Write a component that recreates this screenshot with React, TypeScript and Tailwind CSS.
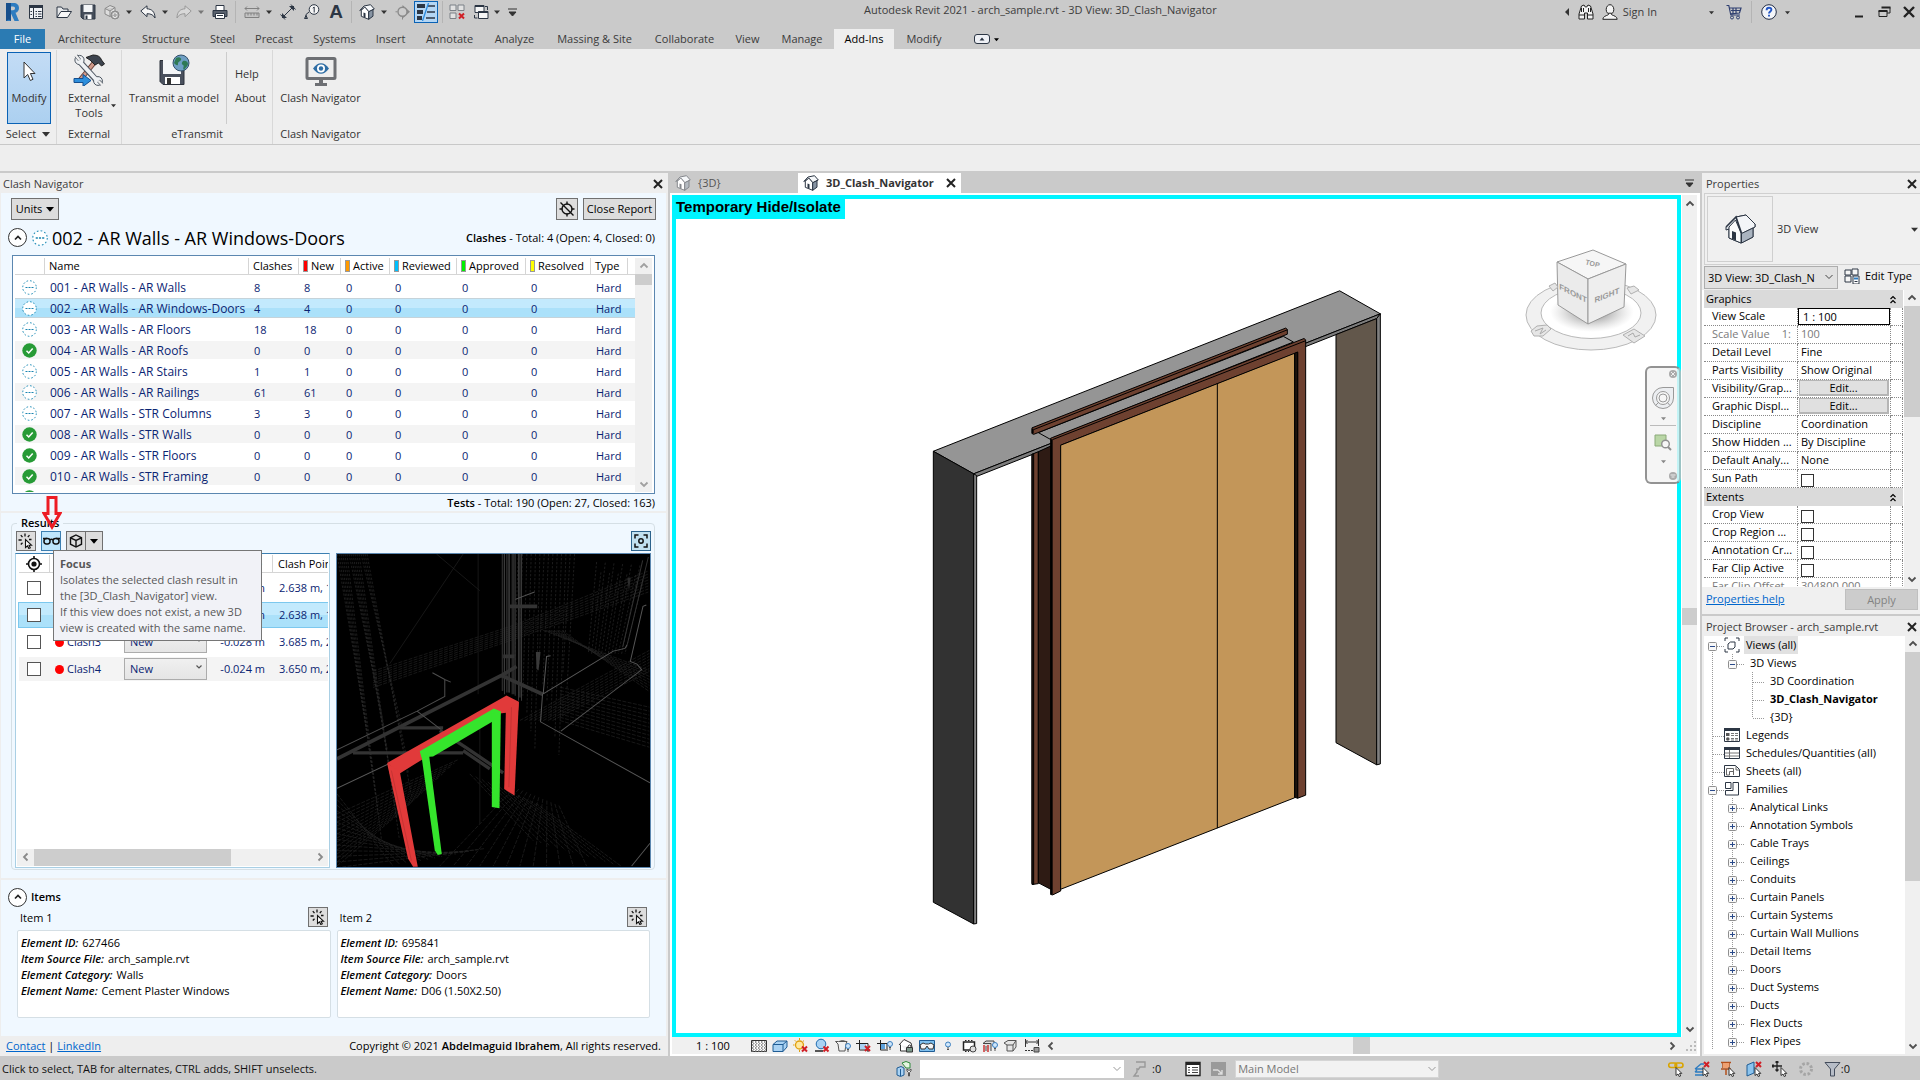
import React, { useState } from "react";

const INK = "#2c3644";

/* ---------- small shared pieces ---------- */

function Svg({ children, w = 16, h = 16, vb }: { children: React.ReactNode; w?: number; h?: number; vb?: string }) {
  return (
    <svg width={w} height={h} viewBox={vb ?? `0 0 ${w} ${h}`} fill="none" className="shrink-0" aria-hidden="true">
      {children}
    </svg>
  );
}

function Caret({ color = "#333", size = 6 }: { color?: string; size?: number }) {
  return (
    <Svg w={size} h={size} vb="0 0 6 6">
      <path d="M0 1.500h6L3 5z" fill={color} />
    </Svg>
  );
}

function Chevron({ dir, color = "#505050" }: { dir: "up" | "down" | "left" | "right"; color?: string }) {
  const d = {
    up: "M1.500 6.500 5 3l3.500 3.500",
    down: "M1.500 3.500 5 7l3.500-3.500",
    left: "M6.500 1.500 3 5l3.500 3.500",
    right: "M3.500 1.500 7 5 3.500 8.500",
  }[dir];
  return (
    <Svg w={10} h={10}>
      <path d={d} stroke={color} strokeWidth="1.800" />
    </Svg>
  );
}

function CloseX() {
  return (
    <button aria-label="Close" className="flex size-3 items-center justify-center">
      <Svg w={10} h={10}>
        <path d="M1 1l8 8M9 1 1 9" stroke="#222" strokeWidth="2" />
      </Svg>
    </button>
  );
}

function ClickIcon() {
  return (
    <Svg w={16} h={16}>
      <path
        d="M7 .5v3M2.800 2.200l1.700 2M11.500 2.200l-1.700 2M.5 7h3.200M13.500 6.500h-2.500M2.800 11.500l1.700-1.700"
        stroke="#111"
        strokeWidth="1.300"
      />
      <path d="M7.500 6.500v8l2-1.700 1.300 2.700 1.500-.7-1.300-2.600h2.500z" fill="#fff" stroke="#111" strokeWidth="1.100" />
    </Svg>
  );
}

function OpenStatus({ size = 15 }: { size?: number }) {
  return (
    <Svg w={size} h={size} vb="0 0 15 15">
      <circle cx="7.500" cy="7.500" r="6.800" fill="#fff" stroke="#1b8ab5" strokeWidth="1" strokeDasharray="1.600 2" />
      <path d="M3.500 7.500h2M6.500 7.500h2M9.500 7.500h2" stroke="#1a84b0" strokeWidth="1.200" />
    </Svg>
  );
}

function DoneStatus() {
  return (
    <Svg w={15} h={15}>
      <circle cx="7.500" cy="7.500" r="7.200" fill="#279b36" />
      <path d="M4.500 7.800 6.700 10l4-4.600" stroke="#fff" strokeWidth="1.500" />
    </Svg>
  );
}

function HouseIcon({ size = 16, faded = false }: { size?: number; faded?: boolean }) {
  const c = faded ? "#85888d" : INK;
  return (
    <Svg w={size} h={size} vb="0 0 16 16">
      <path d="M.8 6.500 5 2l6.500-1.300L15.300 5l-5.500 2.800L6 3.500z" fill="#f6f8fa" stroke={c} strokeWidth="1" strokeLinejoin="round" />
      <path d="M2.300 6.200 5.800 3l3.900 4.500v7.800l-7.400-3z" fill="#fff" stroke={c} strokeWidth="1" strokeLinejoin="round" />
      <path d="M9.700 7.700 14 5.600v6.600l-4.300 3.100z" fill={faded ? "#b5bbc2" : "#8794a3"} stroke={c} strokeWidth="1" strokeLinejoin="round" />
      <path d="M4.500 12.800V8.500l2 .8v4.400" fill={c} />
    </Svg>
  );
}

/* ---------- title bar ---------- */

const RedX = ({ x, y }: { x: number; y: number }) => (
  <path d={`M${x} ${y}l5 5m0-5-5 5`} stroke="#d01f26" strokeWidth="2" />
);

const quick = {
  logo: (
    <Svg w={16} h={20}>
      <path d="M2 1h7.500C13 1 15 3 15 6c0 2.500-1.300 4.200-3.500 4.800L15 19h-4.500L7 11.500V19H2z" fill="#2e7cc0" />
      <path d="M2 1h5v18l-2-1.500L2 19z" fill="#174f8c" />
      <path d="M7 4.500h2c1.300 0 2 .7 2 1.800 0 1.200-.8 1.900-2 1.900H7z" fill="#cacaca" />
    </Svg>
  ),
  props: (
    <Svg>
      <path d="M1.500 1.500h13v13h-13z" fill="#f0f2f5" stroke={INK} />
      <path d="M1 1h14v3H1zM5 4h1v11H5z" fill={INK} />
      <path d="M2.500 7.500H4M2.500 10.500H4M7.500 7.500h1.500m1 0h3.500M7.500 10h1.500m1 0h3.500M7.500 12.500h1.500m1 0h3.500" stroke={INK} />
    </Svg>
  ),
  open: (
    <Svg>
      <path d="M1 13.500V3h4.500l1.500 2h5v2.500" fill="#e6e8ea" stroke={INK} />
      <path d="M1 13.500 5 7.500h10.500l-4 6z" fill="#f7f7f7" stroke={INK} />
    </Svg>
  ),
  save: (
    <Svg>
      <path d="M1 1h14v14H3l-2-2z" fill="#454d5a" stroke={INK} />
      <path d="M3.500 1h9v7h-9z" fill="#f3f5f7" />
      <path d="M4.500 10.500h7V15h-7z" fill="#fff" />
      <path d="M5.500 11.500h2V15h-2z" fill={INK} />
    </Svg>
  ),
  sync: (
    <Svg>
      <path d="M1 4.500 6 1.500l5 2v6L6 12.500 1 10zM1 4.500l5 2.500 5-3.500M6 7v5.500" fill="#ddd" stroke="#8a8a8a" />
      <circle cx="11" cy="11" r="4" fill="#a9a9a9" stroke="#888" />
      <path d="M9 11a2 2 0 0 1 4-.5M13 11.500a2 2 0 0 1-4 .3" stroke="#eee" />
    </Svg>
  ),
  undo: (
    <Svg>
      <path d="M.8 7 7 1.800v3C11.500 5 15 7.500 15 14c-1.500-3-4-4.300-8-4.300v3z" fill="#f6f6f6" stroke={INK} strokeLinejoin="round" />
    </Svg>
  ),
  redo: (
    <Svg>
      <path d="M15.200 7 9 1.800v3C4.500 5 1 7.500 1 14c1.500-3 4-4.300 8-4.300v3z" fill="#d8d8d8" stroke="#999" strokeLinejoin="round" />
    </Svg>
  ),
  print: (
    <Svg>
      <path d="M4 1.500h8V7H4z" fill="#fff" stroke={INK} />
      <path d="M1 6.500h14v6H1z" fill="#5a626e" stroke={INK} />
      <path d="M3.500 9.500h9v5h-9z" fill="#fff" stroke={INK} />
      <path d="M5 11.500h6" stroke={INK} />
    </Svg>
  ),
  measure: (
    <Svg>
      <path d="M1 4.500h14M3 2.500l-2 2 2 2M13 2.500l2 2-2 2" stroke="#808080" />
      <path d="M1 9h14v4.500H1zM4 9v2.500M7 9v2.500M10 9v2.500M13 9v2.500" fill="#c4c4c4" stroke="#808080" />
    </Svg>
  ),
  dim: (
    <Svg>
      <path d="M3.500 12.500 12.500 3.500" stroke={INK} />
      <path d="M2 9v5h5zM9 2h5v5z" fill={INK} />
      <path d="M.5 10.500 5 15.500M11 .5l4.500 5" stroke={INK} />
    </Svg>
  ),
  tag: (
    <Svg>
      <circle cx="10" cy="5.500" r="4.800" fill="#f5f5f5" stroke={INK} />
      <path d="M8.800 4.200 10.200 3v5.500M5 8 2 10.500V15M.5 14.500l1.500-3 1.500 3z" stroke={INK} />
    </Svg>
  ),
  section: (
    <Svg>
      <path d="M7.500 1 15 7.800 7.500 14.500z" fill="#8a8a8a" />
      <circle cx="7.500" cy="7.800" r="4.500" fill="#ccc" stroke="#8a8a8a" strokeWidth="1.400" />
      <path d="M.5 7.800h2M7.500 12.500V15.500" stroke="#8a8a8a" />
    </Svg>
  ),
  thin: (
    <Svg w={20} h={18}>
      <path d="M1 3h8M1 9h6M1 15h5" stroke={INK} strokeWidth="4" />
      <path d="M12 3h7M11 9h8M10 15h9" stroke={INK} strokeWidth="1.300" />
      <path d="M12.500 0 6.500 18" stroke="#2a8be0" strokeWidth="1.300" />
    </Svg>
  ),
  closeHidden: (
    <Svg>
      <path d="M1 1h6v5.500H1zM9 1h6v5.500H9zM1 9h6v5.500H1z" fill="#e2e2e2" stroke="#7b8087" />
      <RedX x={10} y={9.5} />
    </Svg>
  ),
  switchWin: (
    <Svg>
      <path d="M2 1.500h9v7H2zM5.500 7.500h9.500v7H5.500z" fill="#f6f6f6" stroke={INK} />
      <path d="M2 2h9M5.500 8h9.500" stroke={INK} strokeWidth="2" />
      <path d="M1.500 11v3h3M12 2.500h2.500V6" stroke={INK} />
    </Svg>
  ),
  binoculars: (
    <Svg>
      <path d="M3.500 2 6 1l1.300 2h1.400L10 1l2.500 1L15 10v5H9.500V9h-3v6H1v-5z" fill="#f4f4f4" stroke="#222" strokeLinejoin="round" />
      <path d="M3.500 4v4m2-4v4m5-4v4m2-4v4M1 11h5.500m3 0H15" stroke="#222" />
    </Svg>
  ),
  user: (
    <Svg>
      <ellipse cx="8" cy="5.500" rx="3.800" ry="4.800" fill="#f4f4f4" stroke="#222" />
      <path d="M.8 15.300C1 12.500 4 11.800 5.800 11c1.500-.6.500-1.800.5-1.800h3.400s-1 1.200.5 1.800c1.800.8 4.800 1.500 5 4.300z" fill="#f4f4f4" stroke="#222" />
    </Svg>
  ),
  cart: (
    <Svg>
      <path d="M.5 1.500h2.300l2 9.500H14M3.500 4h11.500l-1.500 5-9 .8M7 4v5m3-5v5m-5-2.500h9" stroke="#2f3f70" strokeWidth="1.200" />
      <circle cx="6" cy="13.500" r="1.500" stroke="#2f3f70" />
      <circle cx="12" cy="13.500" r="1.500" stroke="#2f3f70" />
    </Svg>
  ),
  help: (
    <Svg>
      <circle cx="8" cy="8" r="7.300" fill="#f4f6fa" stroke="#222c44" />
      <path d="M5.600 6.200C5.600 4.500 6.600 3.700 8 3.700s2.400.8 2.400 2.100C10.400 7.500 8 7.600 8 9.600M8 10.800v1.800" stroke="#2457c5" strokeWidth="1.900" />
    </Svg>
  ),
};

function Tool({ label, children, className = "" }: { label: string; children: React.ReactNode; className?: string }) {
  return (
    <button title={label} aria-label={label} className={`flex h-[22px] shrink-0 items-center justify-center ${className}`}>
      {children}
    </button>
  );
}

const Rule = ({ className = "" }: { className?: string }) => <span className={`h-[22px] w-px bg-[#b4b4b4] ${className}`} />;

function TitleBar() {
  return (
    <header className="flex h-[29px] items-start bg-[#cacaca] pt-px text-[#3c3c3c]">
      <div className="flex items-center pl-1">
        <Tool label="Revit">{quick.logo}</Tool>
        <Tool label="Home" className="ml-2">{quick.props}</Tool>
        <Tool label="Open" className="ml-3">{quick.open}</Tool>
        <Tool label="Save" className="ml-2">{quick.save}</Tool>
        <Tool label="Synchronize" className="ml-2">{quick.sync}</Tool>
        <Tool label="Synchronize options" className="ml-1.5"><Caret /></Tool>
        <Tool label="Undo" className="ml-2">{quick.undo}</Tool>
        <Tool label="Undo list" className="ml-1.5"><Caret /></Tool>
        <Tool label="Redo" className="ml-2">{quick.redo}</Tool>
        <Tool label="Redo list" className="ml-1.5"><Caret color="#777" /></Tool>
        <Tool label="Print" className="ml-2">{quick.print}</Tool>
        <Rule className="ml-[7px]" />
        <Tool label="Measure" className="ml-2">{quick.measure}</Tool>
        <Tool label="Measure options" className="ml-1.5"><Caret /></Tool>
        <Tool label="Aligned dimension" className="ml-2">{quick.dim}</Tool>
        <Tool label="Tag by category" className="ml-2">{quick.tag}</Tool>
        <Tool label="Text" className="ml-2 w-4 font-['Liberation_Sans'] text-[19px] font-bold text-[#2c3644]">A</Tool>
        <Rule className="ml-[7px]" />
        <Tool label="Default 3D view" className="ml-[7px]"><HouseIcon /></Tool>
        <Tool label="3D view options" className="ml-1.5"><Caret /></Tool>
        <Tool label="Section" className="ml-2">{quick.section}</Tool>
        <Tool label="Thin lines" className="ml-[3px] w-6 border border-[#0a62b5] bg-[#b4d6f4]">{quick.thin}</Tool>
        <Rule className="ml-1" />
        <Tool label="Close inactive views" className="ml-1.5">{quick.closeHidden}</Tool>
        <Tool label="Switch windows" className="ml-2">{quick.switchWin}</Tool>
        <Tool label="Window list" className="ml-[5px]"><Caret /></Tool>
        <Tool label="Customize toolbar" className="ml-2">
          <Svg w={9} h={9}>
            <path d="M0 1h9M1 4h7L4.500 8z" stroke="#333" fill="#333" />
          </Svg>
        </Tool>
      </div>
      <h1 className="min-w-0 flex-1 truncate text-center leading-[18px]">
        Autodesk Revit 2021 - arch_sample.rvt - 3D View: 3D_Clash_Navigator
      </h1>
      <div className="flex items-center pr-[5px]">
        <Tool label="Collapse search">
          <Svg w={6} h={8}><path d="M5 0v8L1 4z" fill="#333" /></Svg>
        </Tool>
        <Tool label="Search" className="ml-2">{quick.binoculars}</Tool>
        <button className="ml-2 flex items-center gap-[5px]">{quick.user}Sign In</button>
        <Tool label="Account" className="ml-[52px]"><Caret size={5} /></Tool>
        <Tool label="App store" className="ml-3">{quick.cart}</Tool>
        <Rule className="ml-[9px]" />
        <Tool label="Help" className="ml-[9px]">{quick.help}</Tool>
        <Tool label="Help menu" className="ml-2"><Caret size={5} /></Tool>
        <Tool label="Minimize" className="ml-16">
          <Svg w={10} h={12}><path d="M1 10.500h8" stroke="#222" strokeWidth="2" /></Svg>
        </Tool>
        <Tool label="Restore" className="ml-3.5">
          <Svg w={13} h={12}>
            <path d="M4 1.500h8v5.500H9M1 5h8v5.500H1z" stroke="#222" />
            <path d="M3.500 1.500h9M.5 5h9" stroke="#222" strokeWidth="2" />
          </Svg>
        </Tool>
        <Tool label="Close" className="ml-3">
          <Svg w={12} h={12}><path d="M1 1l10 10M11 1 1 11" stroke="#222" strokeWidth="2.400" /></Svg>
        </Tool>
      </div>
    </header>
  );
}

/* ---------- ribbon ---------- */

const tabs: [string, string][] = [
  ["Architecture", "w-[85px]"],
  ["Structure", "w-[68px]"],
  ["Steel", "w-[45px]"],
  ["Precast", "w-[58px]"],
  ["Systems", "w-[63px]"],
  ["Insert", "w-[49px]"],
  ["Annotate", "w-[69px]"],
  ["Analyze", "w-[61px]"],
  ["Massing & Site", "w-[99px]"],
  ["Collaborate", "w-[81px]"],
  ["View", "w-[45px]"],
  ["Manage", "w-[64px]"],
  ["Add-Ins", "w-[60px]"],
  ["Modify", "w-[60px]"],
];

function RibbonTabs() {
  return (
    <nav className="flex h-5 bg-[#cacaca] text-[#3a3a3a]">
      <button className="w-[45px] bg-[#2b7bb3] text-white">File</button>
      <span className="w-0.5" />
      {tabs.map(([t, w]) => (
        <button key={t} className={`${w} text-center whitespace-nowrap ${t === "Add-Ins" ? "bg-[#eee] text-black" : ""}`}>
          {t}
        </button>
      ))}
      <button aria-label="Ribbon display" className="ml-5 flex items-center gap-1">
        <Svg w={16} h={10}>
          <rect x=".5" y=".5" width="15" height="9" rx="2.500" fill="#eef0f5" stroke={INK} />
          <path d="M5.500 6.500h5L8 3.500z" fill={INK} />
        </Svg>
        <Caret size={5} color="#000" />
      </button>
    </nav>
  );
}

const RibbonLabel = ({ children }: { children: React.ReactNode }) => (
  <div className="flex h-5 items-center justify-center gap-1.5">{children}</div>
);

function Ribbon() {
  return (
    <section className="flex h-[96px] border-b border-[#c8c8c8] bg-[#eee] pt-px text-[#333]">
      <div className="w-[57px] border-r border-[#d8d8d8] pt-0.5">
        <button className="mx-[7px] flex h-[72px] w-11 flex-col items-center border border-[#0a62b5] bg-linear-to-b from-[#c3dcf5] to-[#acd0f0]">
          <span className="flex h-[37px] items-center">
            <Svg w={14} h={22}>
              <path d="M2 1v16l3.700-3.500 2.600 6 2.700-1.200-2.600-5.800H13z" fill="#fff" stroke="#333" />
            </Svg>
          </span>
          <span className="leading-4">Modify</span>
        </button>
        <RibbonLabel>Select <Caret size={8} /></RibbonLabel>
      </div>
      <div className="w-[65px] border-r border-[#d8d8d8] pt-0.5">
        <button className="flex h-[72px] w-full flex-col items-center">
          <Svg w={32} h={34}>
            <path d="M21 11 7 28" stroke="#6b3f35" strokeWidth="5" />
            <path d="M21 11 7 28" stroke="#cf9a8a" strokeWidth="3" />
            <path d="M13 5.500 20 3q7 0 8.500 5l3 4-3 2-3-3-3.500 2-5-5z" fill="#3d444f" stroke="#222" strokeLinejoin="round" />
            <path d="M8 11 25 30" stroke="#4c5560" strokeWidth="6" />
            <circle cx="6.500" cy="8" r="4.600" fill="#eef1f4" stroke="#4c5560" />
            <circle cx="25" cy="29" r="4.400" fill="#eef1f4" stroke="#4c5560" />
            <path d="M7 10 24.500 29" stroke="#eef1f4" strokeWidth="4" />
            <path d="M3 3.500 6.500 8M29 32.500 25.500 29" stroke="#4c5560" strokeWidth="3.600" />
            <path d="M2 2.500 6.500 8M30 33.500 25.500 29" stroke="#eee" strokeWidth="2.400" />
            <path d="M1 26.500h9v-4l8 6-8 6v-4H1z" fill="#2e8fdc" stroke="#144f8f" />
          </Svg>
          <span className="relative pt-1 leading-[15px]">
            External<br />Tools
            <span className="absolute top-[17px] -right-1.5"><Caret size={5} /></span>
          </span>
        </button>
        <RibbonLabel>External</RibbonLabel>
      </div>
      <div className="w-[151px] border-r border-[#d8d8d8] pt-0.5">
        <div className="flex h-[72px]">
          <button className="flex w-[105px] flex-col items-center border-r border-[#ccc]">
            <Svg w={32} h={38}>
              <path d="M2 8.500h24v24H5l-3-3z" fill="#4a515e" stroke="#2b313b" />
              <path d="M5 8h18v14H5z" fill="#f4f6f8" />
              <path d="M7 25h15v7H7z" fill="#fff" />
              <path d="M9 26h4v6H9z" fill="#333" />
              <circle cx="23" cy="11" r="8" fill="#6e9fc4" stroke="#33506b" />
              <path d="M18 6c3-2 6 0 5 2s-3 1-3 4-3 0-4-1M25 9c3-1 5 1 5 3s-3 4-4 6c-2-2 1-4-1-5s-1-3 0-4z" fill="#2f7a55" />
            </Svg>
            <span className="leading-4 whitespace-nowrap">Transmit a model</span>
          </button>
          <div className="flex flex-col gap-2 pt-[14px] pl-2 leading-4">
            <button className="text-left">Help</button>
            <button className="text-left">About</button>
          </div>
        </div>
        <RibbonLabel>eTransmit</RibbonLabel>
      </div>
      <div className="w-[95px] pt-0.5">
        <button className="flex h-[72px] w-full flex-col items-center">
          <Svg w={32} h={38}>
            <rect x="2" y="6.500" width="28" height="20" rx="1" fill="#eee" stroke="#6d6f73" strokeWidth="3" />
            <path d="M14 28h4v3h4v3H10v-3h4z" fill="#6d6f73" />
            <path d="M8 16.500c5-7 11-7 16 0-5 7-11 7-16 0z" fill="#2e6da4" />
            <circle cx="16" cy="16.500" r="4" fill="#fff" />
            <circle cx="16" cy="16.500" r="2.200" fill="#2e6da4" />
          </Svg>
          <span className="leading-4 whitespace-nowrap">Clash Navigator</span>
        </button>
        <RibbonLabel>Clash Navigator</RibbonLabel>
      </div>
    </section>
  );
}

/* ---------- clash navigator panel ---------- */

const tests: [string, number, boolean][] = [
  ["001 - AR Walls - AR Walls", 8, false],
  ["002 - AR Walls - AR Windows-Doors", 4, false],
  ["003 - AR Walls - AR Floors", 18, false],
  ["004 - AR Walls - AR Roofs", 0, true],
  ["005 - AR Walls - AR Stairs", 1, false],
  ["006 - AR Walls - AR Railings", 61, false],
  ["007 - AR Walls - STR Columns", 3, false],
  ["008 - AR Walls - STR Walls", 0, true],
  ["009 - AR Walls - STR Floors", 0, true],
  ["010 - AR Walls - STR Framing", 0, true],
  ["", 0, true],
];

const testCols: [string, string, string][] = [
  ["Name", "w-[204px]", ""],
  ["Clashes", "w-[50px]", ""],
  ["New", "w-[42px]", "bg-[#f00]"],
  ["Active", "w-[49px]", "bg-[#ff9a00]"],
  ["Reviewed", "w-[67px]", "bg-[#00c0ff]"],
  ["Approved", "w-[69px]", "bg-[#00f000]"],
  ["Resolved", "w-[65px]", "bg-[#ff0]"],
  ["Type", "w-[37px]", ""],
];

const selectedFill = "bg-linear-to-b from-[#c3eafd] from-50% to-[#abe1fa] to-50%";

function VScroll({ thumb, className = "", color }: { thumb: string; className?: string; color?: string }) {
  return (
    <div className={`flex shrink-0 flex-col items-center bg-[#f0f0f0] ${className}`}>
      <button aria-label="Scroll up" className="flex h-4 items-center"><Chevron dir="up" color={color} /></button>
      <div className="min-h-0 w-full flex-1"><div className={`w-full bg-[#cdcdcd] ${thumb}`} /></div>
      <button aria-label="Scroll down" className="flex h-4 items-center"><Chevron dir="down" color={color} /></button>
    </div>
  );
}

function TestsTable() {
  const [selected, setSelected] = useState(1);
  return (
    <div className="mr-[11px] ml-[11px] flex h-[239px] shrink-0 overflow-hidden border border-[#5b87b0] bg-white px-0.5 pt-0.5 pb-px">
      <div className="min-w-0 flex-1 overflow-hidden">
        <table className="-mt-[3px] w-full table-fixed border-separate border-spacing-x-0 border-spacing-y-[3px]">
          <thead>
            <tr className="h-[17px] text-left leading-4">
              <th aria-label="Status" className="w-[30px] border-r border-b border-[#d5d5d5] p-0" />
              {testCols.map(([name, w, swatch]) => (
                <th key={name} className={`${w} border-r border-b border-[#d5d5d5] p-0 pl-1 font-normal whitespace-nowrap`}>
                  <span className="flex items-center gap-[3px]">
                    {swatch && <span className={`h-3 w-[5px] shrink-0 border border-[#999] ${swatch}`} />}
                    {name}
                  </span>
                </th>
              ))}
              <th aria-hidden="true" className="border-b border-[#d5d5d5] p-0" />
            </tr>
          </thead>
          <tbody className="text-[#0a2472]">
            {tests.map(([name, n, done], i) => (
              <tr
                key={i}
                onClick={() => setSelected(i)}
                className={`h-[18px] leading-[17px] ${
                  i === selected ? `${selectedFill} outline outline-[#c5d3da]` : i % 2 ? "bg-[#f4f4f4]" : ""
                }`}
              >
                <td className="p-0 pl-[7px]">{done ? <DoneStatus /> : <OpenStatus />}</td>
                <td className="p-0 pl-[5px] text-[12px] whitespace-nowrap">{name}</td>
                <td className="p-0 pl-[5px]">{name && n}</td>
                <td className="p-0 pl-[5px]">{name && n}</td>
                <td className="p-0 pl-[5px]">{name && 0}</td>
                <td className="p-0 pl-[5px]">{name && 0}</td>
                <td className="p-0 pl-[5px]">{name && 0}</td>
                <td className="p-0 pl-[5px]">{name && 0}</td>
                <td className="p-0 pl-[5px]">{name && "Hard"}</td>
                <td className="p-0" />
              </tr>
            ))}
          </tbody>
        </table>
      </div>
      <VScroll thumb="h-[11px]" className="w-[17px]" color="#a0a0a0" />
    </div>
  );
}

const IconButton = ({ label, children, className = "size-5 border-[#707070] bg-[#ddd]" }: { label: string; children: React.ReactNode; className?: string }) => (
  <button aria-label={label} title={label} className={`flex shrink-0 items-center justify-center border ${className}`}>
    {children}
  </button>
);

function CollapseButton({ label }: { label: string }) {
  return (
    <button aria-label={label} className="flex size-[19px] shrink-0 items-center justify-center rounded-full border border-[#333] bg-white">
      <Svg w={8} h={8}><path d="M1 5.500 4 2.500l3 3" stroke="#222" strokeWidth="1.700" /></Svg>
    </button>
  );
}

const clashes: [string, string, string][] = [
  ["Clash1", "-0.150 m", "2.638 m, 14"],
  ["Clash2", "-0.150 m", "2.638 m, 14"],
  ["Clash3", "-0.028 m", "3.685 m, 2"],
  ["Clash4", "-0.024 m", "3.650 m, 2"],
];

function ResultsTable() {
  return (
    <div className="flex min-h-0 w-[315px] shrink-0 flex-col border border-[#a9cfe4] border-t-[#3c7fb1] bg-white p-px">
      <div className="min-h-0 flex-1 overflow-hidden pl-0.5">
        <table className="-mt-[3px] w-full table-fixed border-separate border-spacing-x-0 border-spacing-y-[3px]">
          <thead>
            <tr className="h-[18px] text-left">
              <th className="w-[31px] border-r border-b border-[#d5d5d5] p-0">
                <span className="flex justify-center">
                  <Svg w={16} h={16}>
                    <circle cx="8" cy="8" r="5.500" stroke="#111" strokeWidth="1.600" />
                    <circle cx="8" cy="8" r="2.600" fill="#111" />
                    <path d="M8 0v3M8 13v3M0 8h3M13 8h3" stroke="#111" strokeWidth="1.600" />
                  </Svg>
                </span>
              </th>
              <th className="w-[72px] border-r border-b border-[#d5d5d5] p-0 pl-1 font-normal">Name</th>
              <th className="w-[92px] border-r border-b border-[#d5d5d5] p-0 pl-1 font-normal">Status</th>
              <th className="w-[59px] border-r border-b border-[#d5d5d5] p-0 pl-1 font-normal">Distance</th>
              <th className="overflow-hidden border-b border-[#d5d5d5] p-0 pl-[5px] font-normal whitespace-nowrap">Clash Point</th>
            </tr>
          </thead>
          <tbody className="text-[#0a2472]">
            {clashes.map(([name, dist, point], i) => (
              <tr key={name} className={`h-6 ${i === 1 ? `${selectedFill} outline outline-[#7cc8ee]` : i % 2 ? "bg-[#f4f4f4]" : ""}`}>
                <td className="p-0 pl-2">
                  <input type="checkbox" aria-label={`Mark ${name}`} className="block size-3.5 appearance-none border border-[#555] bg-white" />
                </td>
                <td className="p-0 pl-[5px]">
                  <span className="flex items-center gap-[3px]"><span className="size-[9px] rounded-full bg-[#f00]" />{name}</span>
                </td>
                <td className="p-0 pl-0.5">
                  <span className="relative block h-[22px] w-[83px]">
                    <select aria-label={`Status of ${name}`} className="block h-full w-full appearance-none border border-[#acacac] bg-linear-to-b from-[#f0f0f0] to-[#e5e5e5] pl-[5px]">
                      <option>New</option>
                      <option>Active</option>
                    </select>
                    <span className="pointer-events-none absolute top-[5px] right-1"><Svg w={8} h={8}><path d="M1.500 2.500 4 5l2.500-2.500" stroke="#555" strokeWidth="1.200" /></Svg></span>
                  </span>
                </td>
                <td className="p-0 pr-2 text-right whitespace-nowrap">{dist}</td>
                <td className="overflow-hidden p-0 pl-[6px] whitespace-nowrap">{point}</td>
              </tr>
            ))}
          </tbody>
        </table>
      </div>
      <div className="flex h-[17px] shrink-0 items-center bg-[#f0f0f0]">
        <button aria-label="Scroll left" className="flex w-[17px] justify-center"><Chevron dir="left" color="#8a8a8a" /></button>
        <div className="h-full flex-1"><div className="h-full w-[71%] bg-[#cdcdcd]" /></div>
        <button aria-label="Scroll right" className="flex w-[17px] justify-center"><Chevron dir="right" color="#8a8a8a" /></button>
      </div>
    </div>
  );
}

const range = (n: number) => Array.from({ length: n }, (_, i) => i);

function ClashPreview() {
  return (
    <div className="min-w-0 flex-1 border border-[#5b87b0] bg-black">
      <svg viewBox="22 101 938 937" preserveAspectRatio="xMidYMid slice" className="block size-full" role="img" aria-label="Clash preview">
        <rect x="22" y="101" width="938" height="937" fill="#000" />
        <g stroke="#2b2b2b" strokeWidth="2" strokeDasharray="7 5">
          {range(16).map((i) => <path key={i} d={`M${22 + i * 6} 101 L${110 + i * 9} ${620 + ((i * 67) % 400)}`} />)}
          {range(14).map((i) => <path key={i} d={`M${565 + i * 13} 101 L${555 + i * 12} ${420 + ((i * 53) % 300)}`} />)}
          {range(12).map((i) => <path key={i} d={`M${800 + i * 13} ${125 + ((i * 31) % 60)} L${775 + i * 10} 400`} />)}
        </g>
        <g stroke="#242424" strokeWidth="2" strokeDasharray="12 4" fill="none">
          {range(8).map((i) => <path key={i} d={`M130 ${452 + i * 7} L560 ${312 + i * 6} L955 ${152 + i * 9}`} />)}
          {range(14).map((i) => <path key={i} d={`M22 ${820 + i * 17} L${190 + i * 21} ${1036 - i * 4}`} />)}
          {range(14).map((i) => <path key={i} d={`M22 ${1036 - i * 12} L${230 + i * 12} ${860 - i * 11}`} />)}
          {range(12).map((i) => <path key={i} d={`M${555 + i * 12} ${800 + i * 5} L${330 + i * 40} 1036`} />)}
          {range(12).map((i) => <path key={i} d={`M${420 + i * 18} ${760 + i * 8} L${610 + i * 24} ${960 + i * 7}`} />)}
          {range(11).map((i) => <path key={i} d={`M690 ${500 + i * 10} L958 ${560 + i * 12}`} />)}
          {range(8).map((i) => <path key={i} d={`M${640 + i * 8} 330 L958 ${450 + i * 9}`} />)}
          {range(8).map((i) => <path key={i} d={`M${570 + i * 14} 600 L958 ${390 + i * 9}`} />)}
        </g>
        <path d="M400 101 180 430M320 101l130 110M445 101v420M450 600v310" stroke="#222" strokeWidth="2" />
        <g stroke="#3a3a3a" strokeWidth="3">
          <path d="M518 101v410M524 101v420M531 101v415M539 101v415M547 101v420M556 101v425M566 101v440M575 101v440" />
          <path d="M518 101v410M536 101v415M552 101v420M570 101v430" stroke="#2a2a2a" strokeWidth="5" />
        </g>
        <g stroke="#333" strokeWidth="11" fill="none">
          <path d="M22 715 515 465 560 438M515 465l125 57" />
          <path d="M70 697h330M210 622h130M330 630l80 52 110 75M400 690l80 55" strokeWidth="10" />
          <path d="M540 258h82M520 408h34" />
        </g>
        <path d="M618 395h14l-6 55-6-4z" fill="#3a3a3a" />
        <path d="M892 172h10l-5 40z" fill="#2c2c2c" />
        <g stroke="#5a5a5a" strokeWidth="3" fill="none">
          <path d="M22 688 262 572 345 528V477l18 8M308 457l37 20M262 572l70 54" stroke="#4e4e4e" />
          <path d="M22 803 240 700M640 520 850 392 885 384 892 372M640 520l10-112 12-2" />
          <path d="M638 520l-6 84L960 787M693 632l242-184-14-17-20-8 38-165 10-4M905 1036l55-68M556 237l58-22" stroke="#555" />
          <path d="M892 372 955 110M878 380 938 120" stroke="#333" />
        </g>
        <g fill="#e13a3a">
          <path d="M172 727 530 525l37 19-2 25-36 8-20 2L285 712l-75 47z" />
          <path d="M172 727 210 752l54 286h-14l-15-24z" />
          <path d="M528 572l39-28-13 281-31-20z" />
        </g>
        <g fill="#35e52c">
          <path d="M270 692 492 564l20 8-2 18-200 118-35 2z" />
          <path d="M275 705h23l38 295-12 3-9-14z" />
          <path d="M486 580l27-8-4 291-23-4z" />
        </g>
        <path d="M185 750l60 270M545 560l-8 240" stroke="#b83030" strokeWidth="2" />
      </svg>
    </div>
  );
}

const items = [
  { title: "Item 1", rows: [["Element ID:", "627466"], ["Item Source File:", "arch_sample.rvt"], ["Element Category:", "Walls"], ["Element Name:", "Cement Plaster Windows"]] },
  { title: "Item 2", rows: [["Element ID:", "695841"], ["Item Source File:", "arch_sample.rvt"], ["Element Category:", "Doors"], ["Element Name:", "D06 (1.50X2.50)"]] },
];

function ClashPanel() {
  return (
    <aside className="flex w-[670px] shrink-0 flex-col border-r-2 border-[#cacaca] bg-[#eee] text-black">
      <div className="flex h-5 shrink-0 items-center justify-between pt-px pr-1 pl-[3px] text-[#3c3c3c]">
        Clash Navigator <CloseX />
      </div>
      <div className="mr-0.5 ml-px flex min-h-0 flex-1 flex-col bg-[#f0f8ff] pt-[5px]">
        <div className="flex h-[22px] items-stretch gap-[5px] pr-2.5 pl-2.5">
          <button className="flex w-12 items-center justify-center gap-1 border border-[#707070] bg-[#ddd]">
            Units
            <Caret size={8} color="#000" />
          </button>
          <span className="flex-1" />
          <IconButton label="Toggle focus" className="w-[22px] border-[#707070] bg-[#ddd]">
            <Svg>
              <circle cx="8" cy="8" r="5" stroke="#111" strokeWidth="1.400" />
              <path d="M8 .5v3M8 12.500v3M.5 8h3M12.500 8h3M1.500 1.500l13 13" stroke="#111" strokeWidth="1.400" />
            </Svg>
          </IconButton>
          <button className="w-[73px] border border-[#707070] bg-[#ddd] whitespace-nowrap">Close Report</button>
        </div>
        <div className="flex h-[35px] items-center pr-[11px] pl-[7px]">
          <CollapseButton label="Collapse tests" />
          <span className="ml-[5px]"><OpenStatus size={16} /></span>
          <h2 className="ml-1 flex-1 text-[18px] whitespace-nowrap">002 - AR Walls - AR Windows-Doors</h2>
          <span><b className="font-semibold">Clashes</b> - Total: 4 (Open: 4, Closed: 0)</span>
        </div>
        <TestsTable />
        <div className="h-[17px] pr-[11px] text-right leading-[17px]">
          <b className="font-semibold">Tests</b> - Total: 190 (Open: 27, Closed: 163)
        </div>
        <div className="h-0.5 shrink-0 bg-[#eee]" />
        <fieldset className="relative mt-0.5 mr-[11px] ml-2.5 flex h-[355px] flex-col rounded-sm border border-[#d5dfe5] px-[3px] pb-[3px]">
          <legend className="ml-0.5 px-1 leading-4 font-semibold">Results</legend>
          <div className="flex h-[22px] shrink-0 pl-px">
            <IconButton label="Select"><ClickIcon /></IconButton>
            <IconButton label="Focus" className="ml-[5px] size-5 border-[#3c7fb1] bg-[#bee6fd]">
              <Svg w={17} h={9}>
                <path d="M0 1.500h4M13 1.500h4M7 3q1.500-1.500 3 0" stroke="#111" strokeWidth="1.400" />
                <rect x="1" y="1.500" width="6" height="5.500" rx="2.400" stroke="#111" strokeWidth="1.500" />
                <rect x="10" y="1.500" width="6" height="5.500" rx="2.400" stroke="#111" strokeWidth="1.500" />
              </Svg>
            </IconButton>
            <IconButton label="Section box" className="ml-[5px] size-5 border-[#707070] bg-[#ddd]">
              <Svg w={14} h={14}>
                <path d="M7 1l5.500 2.800v6.400L7 13l-5.500-2.800V3.800zM1.500 3.800 7 6.500l5.500-2.700M7 6.500V13" stroke="#111" strokeWidth="1.400" />
              </Svg>
            </IconButton>
            <IconButton label="Section box options" className="-ml-px h-5 w-[18px] border-[#707070] bg-[#ddd]"><Caret size={8} color="#000" /></IconButton>
            <span className="flex-1" />
            <IconButton label="Zoom to clash" className="size-5 border-[#2c628b] bg-[#c2e1f0]">
              <Svg w={14} h={14}>
                <path d="M1 4.500V1h3.500M9.500 1H13v3.500M13 9.500V13H9.500M4.500 13H1V9.500" stroke="#111" strokeWidth="1.500" />
                <circle cx="7" cy="7" r="2.200" stroke="#111" strokeWidth="1.500" />
              </Svg>
            </IconButton>
          </div>
          <div className="flex min-h-0 flex-1 gap-1.5">
            <ResultsTable />
            <ClashPreview />
          </div>
          <div className="pointer-events-none absolute -top-[35px] left-[30px]">
            <Svg w={20} h={34}>
              <path d="M6 1.500h8v16h4L10 31 2 17.500h4z" stroke="#ed1c24" strokeWidth="3" />
            </Svg>
          </div>
          <div role="tooltip" className="absolute top-[19px] left-[41px] w-[209px] border border-[#767676] bg-[#f1f2f7] px-1.5 pt-[5px] pb-1 leading-4 whitespace-nowrap text-[#575757]">
            <p className="font-bold">Focus</p>
            <p>Isolates the selected clash result in</p>
            <p>the [3D_Clash_Navigator] view.</p>
            <p>If this view does not exist, a new 3D</p>
            <p>view is created with the same name.</p>
          </div>
        </fieldset>
        <div className="mt-2 h-0.5 shrink-0 bg-[#eee]" />
        <div className="mt-[7px] flex h-5 items-center gap-1 pl-[7px]">
          <CollapseButton label="Collapse items" />
          <h3 className="font-semibold">Items</h3>
        </div>
        <div className="grid grid-cols-2 gap-x-1.5 pr-4 pl-4">
          {items.map((it) => (
            <section key={it.title}>
              <div className="flex h-[23px] items-start justify-between pr-[3px] pl-[3px]">
                <h4 className="leading-[22px]">{it.title}</h4>
                <IconButton label={`Select ${it.title}`}><ClickIcon /></IconButton>
              </div>
              <dl className="h-[88px] rounded-xs border border-[#d5dfe5] bg-white px-[3px] pt-1 leading-4">
                {it.rows.map(([k, v]) => (
                  <div key={k} className="flex gap-1">
                    <dt className="font-semibold italic">{k}</dt>
                    <dd>{v}</dd>
                  </div>
                ))}
              </dl>
            </section>
          ))}
        </div>
      </div>
      <footer className="flex h-5 shrink-0 items-center justify-between pr-[7px] pl-1.5">
        <span>
          <a href="#contact" className="text-[#0066cc] underline">Contact</a> | <a href="#linkedin" className="text-[#0066cc] underline">LinkedIn</a>
        </span>
        <span>Copyright © 2021 <b className="font-semibold">Abdelmaguid Ibrahem</b>, All rights reserved.</span>
      </footer>
    </aside>
  );
}

/* ---------- 3D view ---------- */

function Model() {
  return (
    <svg viewBox="676 199 1001 834" className="absolute inset-0 size-full" role="img" aria-label="Wall and door model">
      <g transform="translate(900 270) scale(.33333 .43367)" stroke="#000" strokeWidth="1" strokeLinejoin="round">
        {[
          ["100,418 1319,48 1441,101 221,470", "#959595"],
          ["221,470 1441,101 1430,112 230,476", "#7c7c7c"],
          ["100,418 221,470 221,1508 100,1458", "#323232"],
          ["221,470 230,474 230,1507 221,1508", "#808080"],
          ["1308,149 1430,112 1430,1141 1308,1090", "#62574b"],
          ["1430,112 1441,101 1441,1139 1430,1141", "#808080"],
          ["396,425 415,419 415,1415 396,1417", "#6e4130"],
          ["396,425 401,424 401,1417 396,1415", "#2e1b14"],
          ["415,419 452,406 452,1428 415,1413", "#2e1b14"],
          ["415,375 1150,153 1180,166 450,390", "#959595"],
          ["396,364 1157,134 1162,137 1162,148 401,379 396,377", "#6e4130"],
          ["452,388 458,386 1212,158 1217,161 1217,1211 1193,1218 1193,190 482,404 482,1432 458,1441 452,1440", "#6e4130"],
          ["482,404 1184,192 1184,1217 482,1428", "#c39659"],
          ["1184,192 1193,189 1193,1218 1184,1216", "#1c120d"],
        ].map(([points, fill]) => (
          <polygon key={points} points={points} fill={fill} vectorEffect="non-scaling-stroke" />
        ))}
        <path d="M401 368 1162 138M458 391 1217 163M952 262V1287" fill="none" vectorEffect="non-scaling-stroke" />
        <path d="M455 390V1440M398 366v11" fill="none" strokeWidth="2" vectorEffect="non-scaling-stroke" />
      </g>
    </svg>
  );
}

function ViewCube() {
  return (
    <svg width="136" height="112" viewBox="1522 246 136 112" className="absolute top-[47px] right-[19px]" role="img" aria-label="View cube">
      <defs>
        <radialGradient id="cubeShadow">
          <stop offset=".3" stopColor="#888" stopOpacity=".7" />
          <stop offset="1" stopColor="#bbb" stopOpacity="0" />
        </radialGradient>
      </defs>
      <path
        d="M1526 315a65 35 0 1 0 130 0a65 35 0 1 0-130 0zM1541 313a50 25.500 0 1 1 100 0a50 25.500 0 1 1-100 0z"
        fill="#f1f1f1"
        fillRule="evenodd"
        stroke="#b9b9b9"
      />
      <ellipse cx="1592" cy="312" rx="42" ry="20" fill="url(#cubeShadow)" />
      <g stroke="#999" strokeWidth="1" strokeLinejoin="round">
        <path d="M1557 262l36-12 33 14-38 15z" fill="#f6f6f6" />
        <path d="M1557 262l31 17v45l-30-19z" fill="#ebebeb" />
        <path d="M1626 264l-38 15v45l36-17z" fill="#eee" />
      </g>
      <g fill="#999" fontFamily="Liberation Sans" fontWeight="700" textAnchor="middle">
        <text transform="translate(1573 296) skewY(27)" fontSize="8">FRONT</text>
        <text transform="translate(1607 298) skewY(-22)" fontSize="8">RIGHT</text>
        <text transform="translate(1592 266) rotate(14)" fontSize="7">TOP</text>
      </g>
      <g stroke="#b0b0b0" fill="#e6e6e6">
        <path d="M1531 331l6-5 10-1 4 4-8 7-9 0z" />
        <path d="M1623 335l11-6 11 7-11 7z" />
        <path d="M1549 286l6-3 3 4-5 4z" />
        <path d="M1627 288l7-2 5 4-8 4z" />
      </g>
      <path d="M1628 336l5-3 2 4 5-2M1535 331l8-3-3 6 6-4" stroke="#aaa" fill="none" />
    </svg>
  );
}

function NavBar() {
  return (
    <div className="absolute top-[167px] -right-1 flex h-[118px] w-9 flex-col items-center rounded-md border-2 border-[#0006] border-r-[#0003] bg-[#f3f3f3cc]">
      <button aria-label="Close navigation bar" className="mt-0.5 mr-0.5 self-end">
        <Svg w={8} h={8}><circle cx="4" cy="4" r="4" fill="#aaa" /><path d="M2 2l4 4M6 2 2 6" stroke="#eee" /></Svg>
      </button>
      <button aria-label="Steering wheel" className="mt-2">
        <Svg w={24} h={24}>
          <path d="M12 1.500h10.500V12A10.500 10.500 0 1 1 12 1.500z" fill="#eceef1" stroke="#999" />
          <circle cx="12" cy="12" r="6.500" fill="#f6f6f6" stroke="#999" />
          <circle cx="12" cy="12" r="4" stroke="#999" />
          <path d="M4.500 19.500 8 16m11 3.500L16 16" stroke="#999" />
        </Svg>
      </button>
      <span className="mt-1.5"><Caret size={5} color="#888" /></span>
      <span className="mt-1 h-px w-[26px] bg-[#bbb]" />
      <button aria-label="Zoom region" className="mt-2">
        <Svg w={18} h={17}>
          <path d="M1 1h11v11H1z" fill="#b9d6a6" stroke="#8aa978" />
          <circle cx="11.500" cy="10" r="3.800" fill="#f6f6f6" stroke="#909090" strokeWidth="1.400" />
          <path d="M14 13l3 3" stroke="#909090" strokeWidth="2" />
        </Svg>
      </button>
      <span className="mt-2"><Caret size={5} color="#888" /></span>
      <button aria-label="Navigation options" className="mt-auto mr-0.5 mb-0.5 self-end">
        <Svg w={8} h={8}><circle cx="4" cy="4" r="4" fill="#aaa" /><path d="M1.500 3h5M2.500 5h3" stroke="#eee" /></Svg>
      </button>
    </div>
  );
}

const bulb = (x: number, y: number) => (
  <g>
    <circle cx={x} cy={y} r="2.500" fill="#cfe6fa" stroke="#3b7fc0" />
    <path d={`M${x - 1} ${y + 3.5}h2M${x - 1} ${y + 5}h2`} stroke="#555" />
  </g>
);

const viewControls: [string, React.ReactNode][] = [
  ["Detail level", <Svg key="a"><path d="M.5 2.500h15v11H.5z" fill="#fff" stroke="#333" /><path d="M1 4h14M1 7h14M1 10h14M1 13h14" stroke="#777" strokeWidth="1.500" strokeDasharray="1.500 1.500" /><path d="M2 5.500h13M2 8.500h13M2 11.500h13" stroke="#999" strokeDasharray="1.500 1.500" /></Svg>],
  ["Visual style", <Svg key="b"><path d="M1 6.500 5 3h10v6l-4 4.500H1z" fill="#a9d2f3" stroke="#1f5c94" /><path d="M1 6.500h10v7M11 6.500 15 3" stroke="#1f5c94" /></Svg>],
  ["Sun path", <Svg key="c"><circle cx="6.500" cy="7" r="4" fill="#ffe9a0" stroke="#e0a010" strokeWidth="1.300" /><path d="M6.500 0v2M6.500 12v2M0 7h1.500M1.800 2.300l1.400 1.400M11 2.500 9.800 3.700" stroke="#e0a010" /><RedX x={9} y={8.5} /></Svg>],
  ["Shadows", <Svg key="d"><circle cx="7" cy="6" r="4.800" fill="#a9d2f3" stroke="#1f6cb0" /><path d="M1 13h8" stroke="#555" strokeWidth="2" /><RedX x={9.5} y={8.5} /></Svg>],
  ["Rendering", <Svg key="e"><path d="M.5 3.500 3 6l1 7h6l1-7 1-2.500H3.500z" fill="#f1f1f1" stroke="#555" /><path d="M4 3.500q3.500-2 7 0" stroke="#555" />{bulb(13, 8)}</Svg>],
  ["Crop view", <Svg key="f"><path d="M0 5.500h12V14M3.500 2v10H14" stroke="#222" /><path d="M4 6h6v5H4z" fill="#a9d2f3" /><RedX x={9} y={8} /></Svg>],
  ["Crop region", <Svg key="g"><path d="M0 5.500h10V13M3.500 2v10H9" stroke="#222" /><path d="M4 6h4v5H4z" fill="#5ea2dd" />{bulb(13, 6)}</Svg>],
  ["Lock 3D view", <Svg key="h"><path d="M1 7 6 1.500 13 5l1 4M2.500 6.500V13H8" fill="#fff" stroke="#333" /><path d="M8.500 9.500h6V14h-6z" fill="#7d9a8c" stroke="#333" /><path d="M10 9.500V8q1.500-2 3 0v1.500" stroke="#333" /></Svg>],
  ["Temporary hide", <Svg key="i"><path d="M.5 2.500h15v11H.5z" fill="#7fc0ee" stroke="#1f5c94" /><path d="M1 7l3-2 2.500 1h3L12 5l3 2-1 4h-4L8 8 6 11H2z" fill="#f5f5f5" stroke="#333" /></Svg>],
  ["Reveal hidden", <Svg key="j">{bulb(8, 6.5)}</Svg>],
  ["Worksharing", <Svg key="k"><path d="M2.500 4h11v8h-11z" fill="#fff" stroke="#222" strokeWidth="1.500" /><path d="M4 2.500h9M4 13.500h4" stroke="#222" strokeDasharray="1.500 1.500" /><circle cx="12" cy="11" r="3" fill="#ddd" stroke="#444" /></Svg>],
  ["Analytical model", <Svg key="l"><path d="M1 5.500 4 3h8v4M1 5.500h8V13M4 8v5" fill="#ddd" stroke="#444" /><path d="M2 7v7M6 7v7" stroke="#c33" strokeWidth="1.500" />{bulb(13, 7)}</Svg>],
  ["Displacement", <Svg key="m"><path d="M1 5 5 2.500h8V9l-3 4H4V7zM4 7h6v6M10 7l3-4.500" fill="#e5e5e5" stroke="#555" /></Svg>],
  ["Constraints", <Svg key="n"><path d="M1.500 1v8M14.500 1v7M1.500 4h13M3.500 2 1.500 4l2 2M12.500 2l2 2-2 2" stroke="#333" /><path d="M1 12.500h8" stroke="#333" strokeDasharray="2 1" /><path d="M10 9.500h5V14h-5z" fill="#999" stroke="#444" /></Svg>],
];

function ViewArea() {
  return (
    <main className="flex min-w-0 flex-1 flex-col border-r-2 border-[#cacaca] bg-[#cacaca]">
      <div className="flex h-5 shrink-0 items-stretch justify-between">
        <div className="flex">
          <button className="flex w-[128px] items-center gap-[7px] pl-[5px] text-[#555]"><HouseIcon faded />{"{3D}"}</button>
          <div className="flex w-[163px] items-center justify-between bg-white pr-1 pl-[5px] font-bold text-[#333]">
            <span className="flex items-center gap-[7px]"><HouseIcon />3D_Clash_Navigator</span><CloseX />
          </div>
        </div>
        <button aria-label="Open views" className="flex items-center pr-1.5">
          <Svg w={9} h={9}><path d="M0 1h9M1 4h7L4.500 8z" stroke="#333" fill="#333" /></Svg>
        </button>
      </div>
      <div className="flex min-h-0 flex-1 flex-col border-2 border-r-[3px] border-white">
        <div className="flex min-h-0 flex-1">
          <div className="relative min-w-0 flex-1 border-4 border-[#00f4ff] bg-white">
            <Model />
            <div className="absolute -top-1 -left-1 h-6 bg-[#00f4ff] px-1 font-['Liberation_Sans'] text-[15px] leading-6 font-bold whitespace-nowrap">Temporary Hide/Isolate</div>
            <ViewCube />
            <NavBar />
          </div>
          <div className="flex w-4 shrink-0 flex-col items-center border-l border-white bg-[#f0f0f0]">
            <button aria-label="Scroll up" className="flex h-[17px] items-center"><Chevron dir="up" /></button>
            <div className="flex min-h-0 w-full flex-1 flex-col justify-center"><div className="h-[17px] bg-[#cdcdcd]" /></div>
            <button aria-label="Scroll down" className="flex h-[17px] items-center"><Chevron dir="down" /></button>
          </div>
        </div>
        <div className="flex h-[17px] shrink-0 items-center bg-[#f0f0f0] pl-6">
          <button className="mr-[21px]">1 : 100</button>
          <div className="flex gap-[5px]">
            {viewControls.map(([name, icon]) => (
              <button key={name} title={name} aria-label={name}>{icon}</button>
            ))}
            <button aria-label="Scroll left" className="flex w-3 items-center justify-center"><Chevron dir="left" /></button>
          </div>
          <div className="flex h-full flex-1 justify-center"><div className="h-full w-[17px] bg-[#cdcdcd]" /></div>
          <button aria-label="Scroll right" className="mr-2"><Chevron dir="right" /></button>
          <Svg w={12} h={12}>
            <path d="M9 1h2v2H9zM9 5h2v2H9zM5 5h2v2H5zM9 9h2v2H9zM5 9h2v2H5zM1 9h2v2H1z" fill="#bbb" />
          </Svg>
        </div>
      </div>
    </main>
  );
}

/* ---------- properties ---------- */

type Prop = { name: string; value?: string; kind?: "input" | "muted" | "button" | "check"; suffix?: string };

const graphics: Prop[] = [
  { name: "View Scale", value: "1 : 100", kind: "input" },
  { name: "Scale Value", value: "100", kind: "muted", suffix: "1:" },
  { name: "Detail Level", value: "Fine" },
  { name: "Parts Visibility", value: "Show Original" },
  { name: "Visibility/Grap...", value: "Edit...", kind: "button" },
  { name: "Graphic Displ...", value: "Edit...", kind: "button" },
  { name: "Discipline", value: "Coordination" },
  { name: "Show Hidden ...", value: "By Discipline" },
  { name: "Default Analy...", value: "None" },
  { name: "Sun Path", kind: "check" },
];

const extents: Prop[] = [
  { name: "Crop View", kind: "check" },
  { name: "Crop Region ...", kind: "check" },
  { name: "Annotation Cr...", kind: "check" },
  { name: "Far Clip Active", kind: "check" },
  { name: "Far Clip Offset", value: "304800.000", kind: "muted" },
];

function PropValue({ p }: { p: Prop }) {
  if (p.kind === "input")
    return <input aria-label={p.name} defaultValue={p.value} className="block h-[17px] w-full border border-black bg-white pl-1" />;
  if (p.kind === "button")
    return (
      <button aria-label={`${p.name} ${p.value}`} className="mx-px block h-4 w-[91px] border border-r-2 border-b-2 border-[#b5b5b5] bg-[#e0e0e0] leading-[13px]">
        {p.value}
      </button>
    );
  if (p.kind === "check")
    return <input type="checkbox" aria-label={p.name} className="ml-[3px] block size-[13px] self-end appearance-none border border-[#333] bg-white" />;
  return <span className="block truncate pl-[3px]">{p.value}</span>;
}

function PropGroup({ title, rows }: { title: string; rows: Prop[] }) {
  return (
    <tbody>
      <tr className="h-[18px] bg-[#dadada]">
        <th colSpan={3} scope="rowgroup" className="p-0 pr-1.5 pl-0.5 text-left font-normal">
          <span className="flex items-center justify-between leading-[18px]">
            {title}
            <Svg w={8} h={9}><path d="M1.500 4 4 1.500 6.500 4M1.500 8 4 5.500 6.500 8" stroke="#000" strokeWidth="1.200" /></Svg>
          </span>
        </th>
      </tr>
      {rows.map((p) => (
        <tr key={p.name} className={`h-[18px] ${p.kind === "muted" ? "text-[#7a7a7a]" : ""}`}>
          <th scope="row" className="border-r border-b border-dotted border-[#888] p-0 pl-2 text-left font-normal whitespace-nowrap">
            <span className="flex h-[17px] items-start justify-between pr-1.5"><span>{p.name}</span><span>{p.suffix}</span></span>
          </th>
          <td className="border-r border-b border-dotted border-[#888] p-0"><div className="flex h-[17px] items-start"><PropValue p={p} /></div></td>
          <td className="border-r border-b border-dotted border-[#888] p-0" />
        </tr>
      ))}
    </tbody>
  );
}

function Properties() {
  return (
    <section className="flex shrink-0 flex-col border-b-2 border-[#cacaca]">
      <div className="flex h-5 items-center justify-between pt-px pr-0.5 pl-1 text-[#3c3c3c]">Properties <CloseX /></div>
      <button className="ml-0.5 flex h-[72px] items-center border-t border-b border-l border-[#d0d0d0] bg-[#f0f0f0] px-0.5 text-[#333]">
        <span className="flex size-[66px] items-center justify-center border border-[#cfcfcf]">
          <Svg w={32} h={32}>
            <path d="M2 14 12 4 22 2l9 9v3l-2 1v9l-12 6-12-5v-9l-3 1z" fill="#dfe3e8" stroke={INK} strokeLinejoin="round" />
            <path d="M12 4 22 2l9 9v3l-14 7z" fill="#f3f5f8" stroke={INK} strokeLinejoin="round" />
            <path d="M5 14 11.500 7 17 20v10L5 25z" fill="#fafbfc" stroke={INK} strokeLinejoin="round" />
            <path d="M2 14 12 4l5.500 16" stroke={INK} strokeWidth="1.500" />
            <path d="M8 26v-8l4 1.500v8z" fill={INK} />
            <path d="M17.500 20.500 29 15v9l-11.500 6z" fill="#aab4c0" stroke={INK} strokeLinejoin="round" />
          </Svg>
        </span>
        <span className="ml-1 flex-1 text-left">3D View</span>
        <Caret size={7} />
      </button>
      <div className="flex h-[25px] items-start gap-1.5 pt-px pl-0.5">
        <div className="relative h-[23px] w-[134px]">
          <select aria-label="View" className="block size-full appearance-none border border-[#adadad] bg-[#e1e1e1] pl-[3px]">
            <option>3D View: 3D_Clash_N</option>
          </select>
          <span className="pointer-events-none absolute top-1.5 right-1"><Svg w={10} h={10}><path d="M1.500 3 5 6.500 8.500 3" stroke="#444" /></Svg></span>
        </div>
        <button className="flex h-[19px] items-center gap-[5px] whitespace-nowrap">
          <Svg>
            <path d="M1 2h6v5H1zM8 1h6v6H8zM1 8h6v6H1z" fill="#f6f6f6" stroke={INK} />
            <path d="M9 8h6v8H9z" fill="#fff" stroke={INK} />
            <path d="M10 9.500h4v2h-4z" fill="#2e7cc0" />
            <path d="M10.500 13.500h3" stroke={INK} />
          </Svg>
          Edit Type
        </button>
      </div>
      <div className="flex h-[297px] bg-white">
        <div className="ml-0.5 min-w-0 flex-1 overflow-hidden">
          <table className="w-[199px] table-fixed border-separate border-spacing-0">
            <colgroup>
              <col className="w-[94px]" />
              <col className="w-[93px]" />
              <col />
            </colgroup>
            <PropGroup title="Graphics" rows={graphics} />
            <PropGroup title="Extents" rows={extents} />
          </table>
        </div>
        <VScroll thumb="h-[111px]" className="w-4" />
      </div>
      <div className="flex h-[27px] items-start justify-between bg-[#f0f0f0] pt-0.5 pr-0.5 pl-1">
        <a href="#help" className="leading-5 text-[#0066cc] underline">Properties help</a>
        <button disabled className="h-[21px] w-[73px] border border-[#bfbfbf] bg-[#ccc] text-[#838383]">Apply</button>
      </div>
    </section>
  );
}

/* ---------- project browser ---------- */

type GuideKind = "minus" | "minusFirst" | "plus" | "tee" | "line" | "last" | "none" | "minusEnd";

function Guide({ kind }: { kind: GuideKind }) {
  const vertical: Record<GuideKind, string> = {
    minus: "M8.500 0v18",
    minusFirst: "M8.500 10v8",
    minusEnd: "M8.500 0v10",
    plus: "M8.500 0v18",
    tee: "M8.500 0v18",
    line: "M8.500 0v18",
    last: "M8.500 0v10",
    none: "",
  };
  const branch = kind !== "line" && kind !== "none";
  const box = kind.startsWith("minus") || kind === "plus";
  return (
    <Svg w={20} h={18}>
      <path d={vertical[kind] + (branch ? "M9 10.500h11" : "")} stroke="#999" strokeDasharray="1 1" />
      {box && (
        <>
          <rect x="4.500" y="6.500" width="8" height="8" rx="1" fill="#f8f8f8" stroke="#8f8f8f" />
          <path d={kind === "plus" ? "M6 10.500h5M8.500 8v5" : "M6 10.500h5"} stroke="#2a4a8a" />
        </>
      )}
    </Svg>
  );
}

const treeIcons: Record<string, React.ReactNode> = {
  views: <Svg><path d="M1 4V1h3M12 1h3v3M15 12v3h-3M4 15H1v-3" stroke={INK} /><path d="M4 7l2.500-2H11v5l-2 2H4z" fill="#fff" stroke={INK} /></Svg>,
  legends: <Svg><path d="M.5 1.500h15v13H.5z" fill="#fff" stroke={INK} /><path d="M0 1h16v3H0z" fill={INK} /><path d="M2 6h3.500v3H2z" fill="#555" /><circle cx="3.800" cy="12" r="1.800" fill="#555" /><path d="M7 6.500h3m1 0h3M7 8.500h3m1 0h3M7 11.500h3m1 0h3M7 13h3m1 0h3" stroke="#777" /></Svg>,
  schedules: <Svg><path d="M.5 2.500h15v11H.5z" fill="#fff" stroke={INK} /><path d="M0 2h16v3H0z" fill={INK} /><path d="M1 8h14M1 11h14M5.500 5v8" stroke="#777" /></Svg>,
  sheets: <Svg><path d="M.5 2.500h11l4 4v7H.5z" fill="#fff" stroke={INK} /><path d="M2.500 5.500h7V12M2.500 5.500V12h3V8.500h4M12 3v4h3" stroke="#666" /></Svg>,
  families: <Svg><path d="M1.500 1.500h5.500v6H1.500zM9 1.500h5.500v12.500h-13V9.500H9z" fill="#fff" stroke={INK} /></Svg>,
};

type TreeNode = { label: string; guides: GuideKind[]; icon?: string; bold?: boolean; selected?: boolean };

const tree: TreeNode[] = [
  { label: "Views (all)", guides: ["minusFirst"], icon: "views", selected: true },
  { label: "3D Views", guides: ["line", "minusEnd"] },
  { label: "3D Coordination", guides: ["line", "none", "tee"] },
  { label: "3D_Clash_Navigator", guides: ["line", "none", "tee"], bold: true },
  { label: "{3D}", guides: ["line", "none", "last"] },
  { label: "Legends", guides: ["tee"], icon: "legends" },
  { label: "Schedules/Quantities (all)", guides: ["tee"], icon: "schedules" },
  { label: "Sheets (all)", guides: ["tee"], icon: "sheets" },
  { label: "Families", guides: ["minus"], icon: "families" },
  ...[
    "Analytical Links", "Annotation Symbols", "Cable Trays", "Ceilings", "Conduits", "Curtain Panels", "Curtain Systems",
    "Curtain Wall Mullions", "Detail Items", "Doors", "Duct Systems", "Ducts", "Flex Ducts", "Flex Pipes",
  ].map((label): TreeNode => ({ label, guides: ["line", "plus"] })),
];

function ProjectBrowser() {
  return (
    <section className="flex min-h-0 flex-1 flex-col">
      <div className="flex h-5 shrink-0 items-center justify-between pt-px pr-0.5 pl-1 text-[#3c3c3c]">
        Project Browser - arch_sample.rvt <CloseX />
      </div>
      <div className="mb-0.5 ml-0.5 flex min-h-0 flex-1 bg-white">
        <ul className="min-w-0 flex-1 overflow-hidden">
          {tree.map((n) => (
            <li key={n.label} className="flex h-[18px] items-center whitespace-nowrap">
              {n.guides.map((g, i) => <Guide key={i} kind={g} />)}
              {n.icon && treeIcons[n.icon]}
              <span className={`leading-[18px] ${n.icon ? "ml-1 px-0.5" : "ml-1.5"} ${n.selected ? "bg-[#e1e1e1]" : ""} ${n.bold ? "font-bold" : ""}`}>
                {n.label}
              </span>
            </li>
          ))}
        </ul>
        <VScroll thumb="h-[229px]" className="w-[15px]" />
      </div>
    </section>
  );
}

/* ---------- status bar ---------- */

const arrowTip = (x: number, y: number) => (
  <path d={`M${x} ${y}v8l2-1.500 1.200 2.500 1.500-.6-1.200-2.500h2.300z`} fill="#fff" stroke="#222" strokeWidth=".9" />
);

const selectTools: [string, React.ReactNode][] = [
  ["Select links", <Svg key="a"><rect x=".7" y="2" width="8" height="4.500" rx="2.200" stroke="#d9a400" strokeWidth="1.600" /><rect x="7" y="2" width="8" height="4.500" rx="2.200" stroke="#d9a400" strokeWidth="1.600" />{arrowTip(8, 6.5)}</Svg>],
  ["Select underlay", <Svg key="b"><path d="M1 8l6-5h3M1 8h8M1 11h8M1 11l2-2M1 14h8" stroke="#2e7cc0" strokeWidth="1.300" /><RedX x={10} y={1} />{arrowTip(9, 6.5)}</Svg>],
  ["Select pinned", <Svg key="c"><path d="M1 1.500h10M3 2v5M9 2v5M1 8h10M6 8v6" stroke="#b3501c" strokeWidth="1.500" /><path d="M3 2h6v5H3z" fill="#f0a070" />{arrowTip(9, 6.5)}</Svg>],
  ["Select by face", <Svg key="d"><path d="M1 4l7-3v11l-7 3z" fill="#8cc4ee" stroke="#1f5c94" /><RedX x={10} y={1} />{arrowTip(9, 6.5)}</Svg>],
  ["Drag elements", <Svg key="e"><path d="M5 0v10M0 5h10M3.500 1.500 5 0l1.500 1.500M3.500 8.500 5 10l1.500-1.500M1.500 3.500 0 5l1.500 1.500" stroke="#222" strokeWidth="1.300" />{arrowTip(9, 6.5)}</Svg>],
  ["Background processes", <Svg key="f"><circle cx="8" cy="8" r="5.500" stroke="#a5a5a5" strokeWidth="3" strokeDasharray="2.500 1.800" /></Svg>],
];

function StatusBar() {
  return (
    <footer className="flex h-6 shrink-0 items-center bg-[#cacaca] pt-0.5 text-[#111]">
      <p className="w-[896px] pl-0.5">Click to select, TAB for alternates, CTRL adds, SHIFT unselects.</p>
      <Svg>
        <path d="M6 2l4-1.500L14 2v5h-4z" fill="#e5f5e0" stroke="#2f8a3c" />
        <path d="M1 7l4-1.500L8 7v7l-3.500 1.500L1 14zM4.500 8v7" fill="#a9d2f3" stroke="#1f5c94" />
        <path d="M11 8l2 1.500L15 8v2l-1.500 1.500V15h-1v-3.500L11 10z" fill="#eee" stroke="#555" />
      </Svg>
      <span className="relative ml-2 h-[18px] w-[204px]">
        <select aria-label="Active workset" className="block size-full appearance-none bg-white" />
        <span className="pointer-events-none absolute top-1 right-0.5 flex"><Svg w={10} h={10}><path d="M1.500 3 5 6.500 8.500 3" stroke="#999" /></Svg></span>
      </span>
      <span className="ml-2"><Svg><path d="M4 1h9v5H8L6 9M5 7v4l-3 4h5" stroke="#999" strokeWidth="1.400" /></Svg></span>
      <span className="ml-1">:0</span>
      <span className="ml-6"><Svg><path d="M1 1.500h14v13H1z" fill="#fff" stroke="#222" strokeWidth="1.400" /><path d="M1 3h14" stroke="#222" strokeWidth="2" /><path d="M3 6.500h2M3 9h2M3 11.500h2M7 6.500h6M7 9h6M7 11.500h6" stroke="#444" /></Svg></span>
      <span className="ml-2.5"><Svg><path d="M0 1h15v14H0z" fill="#9a9a9a" /><path d="M2 9h5M7 9l4 4M11 9v4H7" stroke="#ddd" strokeWidth="1.400" /></Svg></span>
      <span className="relative ml-2 h-[18px] w-[204px]">
        <select aria-label="Design option" className="block size-full appearance-none border border-[#d5d5d5] bg-[#f2f2f2] pl-0.5 text-[#777]">
          <option>Main Model</option>
        </select>
        <span className="pointer-events-none absolute top-1 right-0.5 flex"><Svg w={10} h={10}><path d="M1.500 3 5 6.500 8.500 3" stroke="#999" /></Svg></span>
      </span>
      <span className="flex-1" />
      <div className="flex items-center gap-2.5">
        {selectTools.map(([name, icon]) => <button key={name} aria-label={name} title={name}>{icon}</button>)}
        <button className="flex items-center">
          <Svg w={17} h={16}><path d="M1 1.500h15L10.500 8v7h-4V8z" fill="#b7bdc7" stroke="#444d5c" /></Svg>:0
        </button>
      </div>
      <span className="w-[70px]" />
    </footer>
  );
}

export default function App() {
  return (
    <div className="flex h-screen flex-col overflow-hidden bg-[#eee] font-['Open_Sans',sans-serif] text-[11px] leading-4">
      <TitleBar />
      <RibbonTabs />
      <Ribbon />
      <div className="h-[28px] shrink-0 border-b-2 border-[#cacaca] bg-[#eee]" />
      <div className="flex min-h-0 flex-1">
        <ClashPanel />
        <ViewArea />
        <aside className="flex w-[218px] shrink-0 flex-col bg-[#eee]">
          <Properties />
          <ProjectBrowser />
        </aside>
      </div>
      <StatusBar />
    </div>
  );
}
